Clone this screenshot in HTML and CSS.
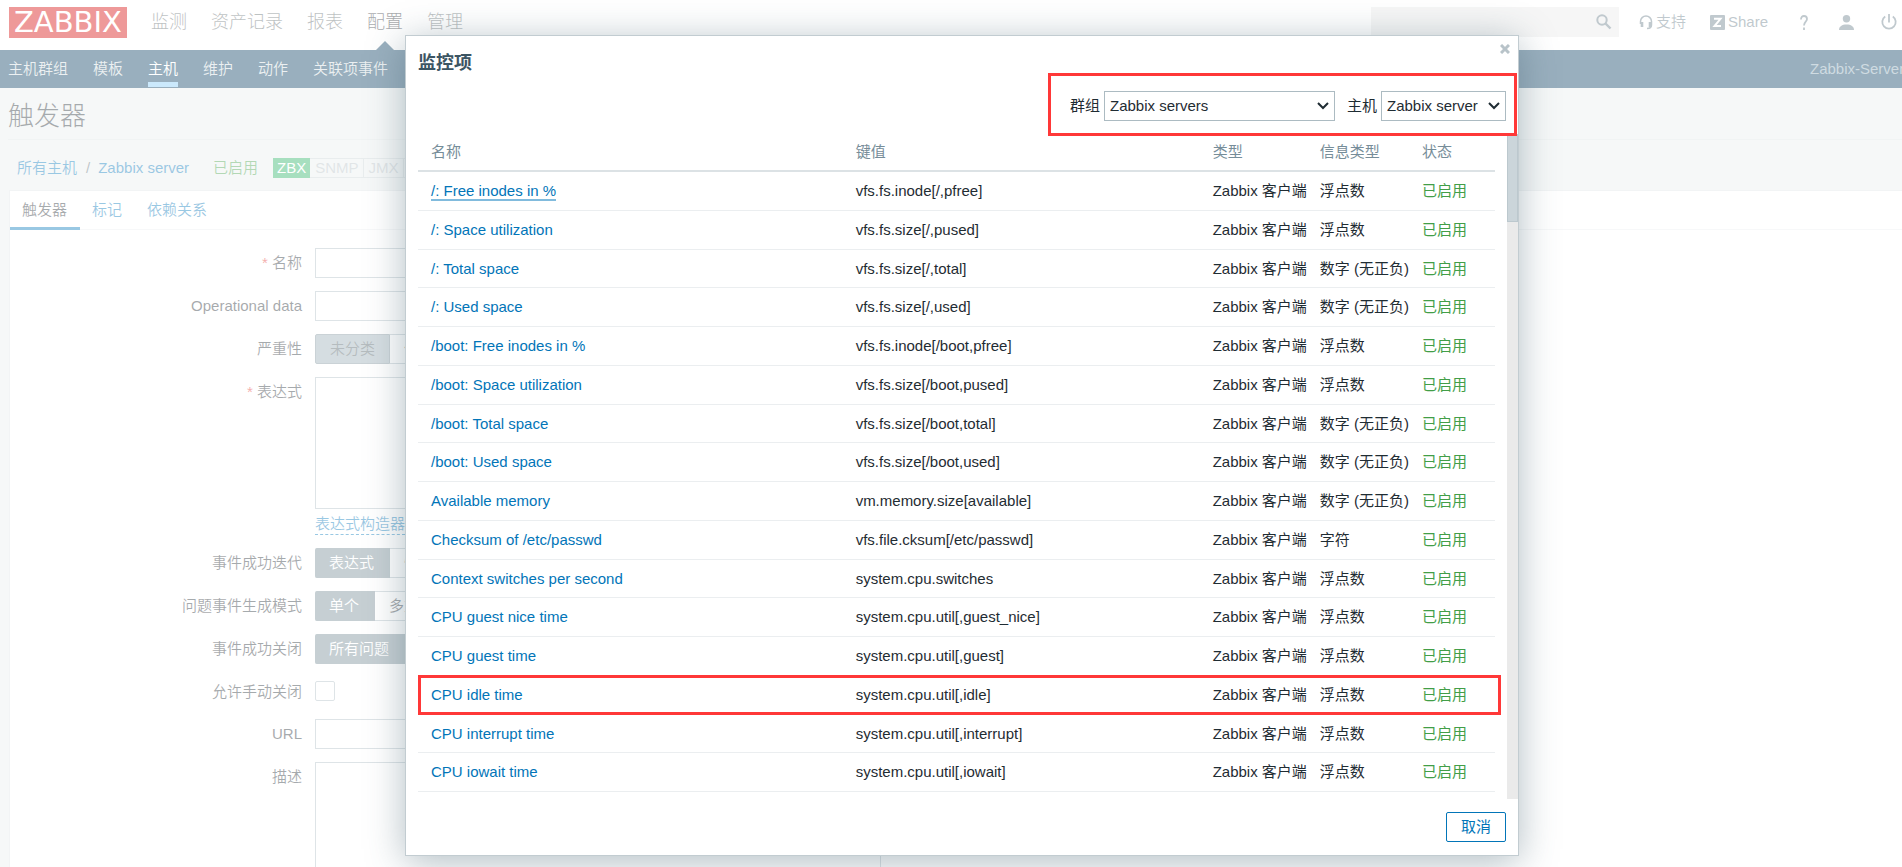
FILE: index.html
```html
<!DOCTYPE html>
<html lang="zh-CN">
<head>
<meta charset="utf-8">
<title>触发器</title>
<link rel="stylesheet" href="styles.css">
</head>
<body>
<div class="page">
  <header class="topbar">
    <a class="logo" href="#">ZABBIX</a>
    <nav class="main-nav">
      <a href="#">监测</a>
      <a href="#">资产记录</a>
      <a href="#">报表</a>
      <a href="#" class="active">配置</a>
      <a href="#">管理</a>
    </nav>
    <form class="search">
      <input type="search" aria-label="搜索">
      <button type="button" aria-label="搜索">
        <svg width="16" height="16" viewBox="0 0 16 16" fill="none" stroke="currentColor"><circle cx="6" cy="6" r="4.700" stroke-width="2"/><path d="M9.500 9.500 14.500 14.500" stroke-width="2.400"/></svg>
      </button>
    </form>
    <div class="tools">
      <a href="#" class="tool-support"><svg width="14" height="15" viewBox="0 0 14 15" fill="none" stroke="currentColor"><path d="M1.500 9V6.500a5.500 5.500 0 0 1 11 0V10c0 2.500-1.500 3.500-4.500 3.500" stroke-width="1.500"/><path d="M3 7v5M11 7v5" stroke-width="2.600"/></svg>支持</a>
      <a href="#" class="tool-share"><svg width="15" height="15" viewBox="0 0 15 15"><rect width="15" height="15" rx="1" fill="currentColor"/><path d="M4 3.800h6.500L4.500 11h6.500" fill="none" stroke="#fff" stroke-width="2"/></svg>Share</a>
      <a href="#" class="tool-help" aria-label="帮助"><svg width="8" height="15" viewBox="0 0 8 15" fill="none" stroke="currentColor" stroke-width="1.800"><path d="M1 4.500C1 2 2.200 1 4 1s3 1 3 3c0 2.500-3 3-3 6.500M4 12.500V15"/></svg></a>
      <a href="#" class="tool-user" aria-label="用户"><svg width="15" height="15" viewBox="0 0 15 15" fill="currentColor"><circle cx="7.500" cy="3.700" r="3.700"/><path d="M0 15c0-3.600 3-5.500 7.500-5.500S15 11.400 15 15z"/></svg></a>
      <a href="#" aria-label="退出"><svg width="16" height="16" viewBox="0 0 16 16" fill="none" stroke="currentColor" stroke-width="1.800"><path d="M8 0v8.500M4.200 2.500a6.700 6.700 0 1 0 7.600 0"/></svg></a>
    </div>
  </header>
  <nav class="sub-nav">
    <a href="#">主机群组</a>
    <a href="#">模板</a>
    <a href="#" class="active">主机</a>
    <a href="#">维护</a>
    <a href="#">动作</a>
    <a href="#">关联项事件</a>
    <span class="server">Zabbix-Server</span>
  </nav>
  <main class="content">
    <h1>触发器</h1>
    <div class="crumbs">
      <a href="#">所有主机</a><span class="sep">/</span><a href="#">Zabbix server</a>
      <span class="enabled">已启用</span>
      <span class="badges"><span class="on">ZBX</span><span>SNMP</span><span>JMX</span><span>IPMI</span></span>
    </div>
    <section class="panel">
      <div class="tabs">
        <a href="#" class="active">触发器</a>
        <a href="#">标记</a>
        <a href="#">依赖关系</a>
      </div>
      <form class="fields">
        <label for="f-name"><i>*</i> 名称</label>
        <input id="f-name" type="text">
        <label for="f-op">Operational data</label>
        <input id="f-op" type="text">
        <span class="label">严重性</span>
        <div class="seg severity"><button type="button" class="on">未分类</button><button type="button">信息</button></div>
        <label for="f-expr"><i>*</i> 表达式</label>
        <div class="expr"><textarea id="f-expr"></textarea><a href="#">表达式构造器</a></div>
        <span class="label">事件成功迭代</span>
        <div class="seg"><button type="button" class="on">表达式</button><button type="button">恢复表达式</button></div>
        <span class="label">问题事件生成模式</span>
        <div class="seg"><button type="button" class="on">单个</button><button type="button">多重</button></div>
        <span class="label">事件成功关闭</span>
        <div class="seg"><button type="button" class="on">所有问题</button></div>
        <label for="f-manual">允许手动关闭</label>
        <input id="f-manual" type="checkbox">
        <label for="f-url">URL</label>
        <input id="f-url" type="text">
        <label for="f-desc">描述</label>
        <textarea id="f-desc"></textarea>
      </form>
    </section>
  </main>
</div>
<div class="overlay"></div>
<div class="modal" role="dialog" aria-labelledby="dlg-title">
  <button class="close" type="button" aria-label="关闭"><svg width="10" height="10" viewBox="0 0 10 10" stroke="currentColor" stroke-width="3"><path d="M1 1 9 9M9 1 1 9"/></svg></button>
  <h2 id="dlg-title">监控项</h2>
  <div class="filters">
    <label for="s-group">群组</label>
    <select id="s-group" class="group"><option>Zabbix servers</option></select>
    <label for="s-host">主机</label>
    <select id="s-host" class="host"><option>Zabbix server</option></select>
    <div class="mark"></div>
  </div>
  <div class="body">
    <table>
      <colgroup><col><col class="c-key"><col class="c-type"><col class="c-info"><col class="c-status"></colgroup>
      <thead><tr><th>名称</th><th>键值</th><th>类型</th><th>信息类型</th><th>状态</th></tr></thead>
      <tbody>
        <tr><td><a href="#" class="focus">/: Free inodes in %</a></td><td>vfs.fs.inode[/,pfree]</td><td>Zabbix 客户端</td><td>浮点数</td><td>已启用</td></tr>
        <tr><td><a href="#">/: Space utilization</a></td><td>vfs.fs.size[/,pused]</td><td>Zabbix 客户端</td><td>浮点数</td><td>已启用</td></tr>
        <tr><td><a href="#">/: Total space</a></td><td>vfs.fs.size[/,total]</td><td>Zabbix 客户端</td><td>数字 (无正负)</td><td>已启用</td></tr>
        <tr><td><a href="#">/: Used space</a></td><td>vfs.fs.size[/,used]</td><td>Zabbix 客户端</td><td>数字 (无正负)</td><td>已启用</td></tr>
        <tr><td><a href="#">/boot: Free inodes in %</a></td><td>vfs.fs.inode[/boot,pfree]</td><td>Zabbix 客户端</td><td>浮点数</td><td>已启用</td></tr>
        <tr><td><a href="#">/boot: Space utilization</a></td><td>vfs.fs.size[/boot,pused]</td><td>Zabbix 客户端</td><td>浮点数</td><td>已启用</td></tr>
        <tr><td><a href="#">/boot: Total space</a></td><td>vfs.fs.size[/boot,total]</td><td>Zabbix 客户端</td><td>数字 (无正负)</td><td>已启用</td></tr>
        <tr><td><a href="#">/boot: Used space</a></td><td>vfs.fs.size[/boot,used]</td><td>Zabbix 客户端</td><td>数字 (无正负)</td><td>已启用</td></tr>
        <tr><td><a href="#">Available memory</a></td><td>vm.memory.size[available]</td><td>Zabbix 客户端</td><td>数字 (无正负)</td><td>已启用</td></tr>
        <tr><td><a href="#">Checksum of /etc/passwd</a></td><td>vfs.file.cksum[/etc/passwd]</td><td>Zabbix 客户端</td><td>字符</td><td>已启用</td></tr>
        <tr><td><a href="#">Context switches per second</a></td><td>system.cpu.switches</td><td>Zabbix 客户端</td><td>浮点数</td><td>已启用</td></tr>
        <tr><td><a href="#">CPU guest nice time</a></td><td>system.cpu.util[,guest_nice]</td><td>Zabbix 客户端</td><td>浮点数</td><td>已启用</td></tr>
        <tr><td><a href="#">CPU guest time</a></td><td>system.cpu.util[,guest]</td><td>Zabbix 客户端</td><td>浮点数</td><td>已启用</td></tr>
        <tr class="marked"><td><a href="#">CPU idle time</a></td><td>system.cpu.util[,idle]</td><td>Zabbix 客户端</td><td>浮点数</td><td>已启用</td></tr>
        <tr><td><a href="#">CPU interrupt time</a></td><td>system.cpu.util[,interrupt]</td><td>Zabbix 客户端</td><td>浮点数</td><td>已启用</td></tr>
        <tr><td><a href="#">CPU iowait time</a></td><td>system.cpu.util[,iowait]</td><td>Zabbix 客户端</td><td>浮点数</td><td>已启用</td></tr>
      </tbody>
    </table>
    <div class="scrollbar"><div class="thumb"></div></div>
  </div>
  <div class="footer"><button type="button">取消</button></div>
</div>
</body>
</html>
```
FILE: styles.css
```css
* { box-sizing: border-box; }
html, body { height: 100%; }
body {
  margin: 0;
  overflow: hidden;
  position: relative;
  background: #e9eeed;
  color: #1f2c33;
  font: 400 15px/20px "Liberation Sans", "Noto Sans CJK SC", sans-serif;
}
a { color: #0275b8; text-decoration: none; }
input, textarea, select, button { font: inherit; color: inherit; margin: 0; }

.page { height: 100%; overflow: hidden; font-weight: 350; }

.topbar {
  display: flex;
  align-items: center;
  height: 50px;
  padding: 0 5px 6px 9px;
  background: #fff;
}
.logo {
  padding: 0 5px;
  background: #d40000;
  color: #fff;
  font: 29px/31px "DejaVu Sans", sans-serif;
}
.main-nav { display: flex; gap: 24px; margin-left: 24px; align-self: stretch; }
.main-nav a { position: relative; color: #5b6668; font-size: 18px; font-weight: 300; line-height: 44px; }
.main-nav a.active { color: #1f2c33; }
.main-nav a.active::after {
  content: "";
  position: absolute;
  left: 9px;
  top: 41px;
  border: 9px solid transparent;
  border-top: 0;
  border-bottom-color: #00395d;
}
.search { display: flex; align-items: center; width: 248px; height: 30px; margin-left: auto; padding-right: 7px; background: #e8e8e8; }
.search input { flex: 1; min-width: 0; height: 30px; border: 0; background: none; }
.search button { display: flex; padding: 0; border: 0; background: none; color: #627884; }
.tools { display: flex; align-items: center; margin-left: 20px; }
.tools a { display: flex; align-items: center; gap: 3px; color: #627884; }
.tool-support { margin-right: 24px; }
.tool-share { margin-right: 32px; }
.tool-help { margin-right: 31px; }
.tool-user { margin-right: 27px; }

.sub-nav { display: flex; gap: 25px; height: 38px; padding-left: 8px; background: #00395d; overflow: hidden; }
.sub-nav a { height: 37px; line-height: 38px; color: #d0dade; }
.sub-nav a.active { color: #fff; border-bottom: 5px solid #7dc8f8; }
.sub-nav .server { flex: none; width: 92px; margin-left: auto; line-height: 38px; color: #87a5b6; white-space: nowrap; }

.content { padding-left: 9px; }
h1 { height: 52px; margin: 0 0 0 -1px; border-bottom: 1px solid #dce3e3; font-size: 26px; font-weight: 300; line-height: 57px; }
.crumbs { display: flex; align-items: center; height: 50px; padding: 6px 0 0 8px; }
.sep { margin: 0 8px 0 9px; color: #62727b; }
.enabled { margin: 0 15px 0 24px; color: #429e47; }
.badges { display: flex; line-height: 18px; }
.badges span { border: 1px solid #c8d1d4; border-left: 0; padding: 0 4px 0 5px; color: #b4bfc4; }
.badges .on { background: #24ae5f; border-color: #24ae5f; color: #fff; padding: 0 3px 0 4px; }

.panel { background: #fff; border: 1px solid #dfe4e7; border-right: 0; height: 1000px; }
.tabs { display: flex; height: 39px; border-bottom: 1px solid #ebeef0; }
.tabs a { padding: 0 13px 0 12px; line-height: 37px; }
.tabs a.active { color: #1f2c33; border-bottom: 3px solid #0275b8; height: 39px; }
.fields {
  display: grid;
  grid-template-columns: 292px 566px;
  column-gap: 13px;
  row-gap: 13px;
  padding-top: 18px;
}
.fields label, .fields .label { text-align: right; line-height: 30px; color: #1f2c33; }
.fields i { color: #e33734; font-style: normal; }
.fields input[type=text] { height: 30px; }
.fields input[type=text], .fields textarea { border: 1px solid #acbbc2; background: #fff; width: 100%; padding: 4px; resize: none; }
.fields textarea { display: block; height: 132px; }
.fields label[for=f-manual] { height: 29px; }
.fields input[type=checkbox] { appearance: none; width: 20px; height: 20px; margin-top: 4px; border: 1px solid #acbbc2; border-radius: 2px; background: #fff; }
.expr a { display: block; width: max-content; margin-top: 5px; border-bottom: 1px dashed #0275b8; line-height: 20px; }
.seg { display: flex; height: 30px; }
.seg button { padding: 0 14px; border: 1px solid #acbbc2; border-left: 0; background: #fff; }
.seg button.on { background: #708892; border-color: #708892; color: #fff; padding: 0 15px 0 14px; border-radius: 2px 0 0 2px; }
.severity button.on { background: #97aab3; border: 1px solid #7a9099; color: #47585f; padding: 0 14px; }

.overlay { position: absolute; inset: 0; background: #fff; opacity: .6; }

.modal {
  position: absolute;
  left: 405px;
  right: 383px;
  top: 35px;
  display: flex;
  flex-direction: column;
  background: #fff;
  border: 1px solid #c2ccd1;
  box-shadow: 0 6px 36px rgba(60, 90, 105, .4);
}
.close { position: absolute; right: 8px; top: 8px; display: flex; padding: 0; border: 0; background: none; color: #b8c3c9; }
.modal h2 { margin: 0; padding: 16px 12px 0; color: #3c5563; font-size: 18px; line-height: 22px; font-weight: 700; }
.filters { position: relative; display: flex; align-items: center; justify-content: flex-end; margin-top: 17px; padding-right: 12px; }
.filters select {
  appearance: none;
  height: 30px;
  padding: 0 5px;
  border: 1px solid #acbbc2;
  border-radius: 0;
  background: #fff url("data:image/svg+xml,%3Csvg xmlns='http://www.w3.org/2000/svg' width='12' height='8' viewBox='0 0 12 8'%3E%3Cpath d='M1 1l5 5 5-5' fill='none' stroke='%231f2c33' stroke-width='2'/%3E%3C/svg%3E") no-repeat right 5px center;
  color: #1f2c33;
}
.filters label { margin-right: 4px; }
.filters .group { width: 231px; margin-right: 12px; }
.filters .host { width: 125px; }
.mark { position: absolute; right: 1px; top: -18px; width: 469px; height: 63px; border: 3px solid #ff3838; pointer-events: none; }
.body { display: flex; justify-content: space-between; height: 665px; margin: 13px 0 0 12px; overflow: hidden; }
table { flex: 1; margin-right: 12px; border-collapse: separate; border-spacing: 0; table-layout: fixed; height: max-content; }
.c-key { width: 357px; }
.c-type { width: 106px; }
.c-info { width: 102px; }
.c-status { width: 86px; }
th, td { padding: 0 0 0 13px; text-align: left; white-space: nowrap; font-weight: 400; height: 39px; border-bottom: 1px solid #ebeef0; }
th { height: 38px; color: #768d99; border-bottom: 2px solid #dce2e5; }
tr:nth-child(4n + 3) td { height: 38px; }
td:last-child { color: #429e47; }
a.focus { display: inline-block; line-height: 17px; border-bottom: 2px solid #81bbdd; }
.marked { position: relative; }
.marked::after { content: ""; position: absolute; inset: -1px -6px 0 0; border: 3px solid #ff3838; }
.scrollbar { width: 11px; background: #eaeaea; }
.thumb { height: 88px; background: #cbd5da; border: 1px solid #bcc8ce; }
.footer { display: flex; justify-content: flex-end; padding: 13px 12px; }
.footer button { width: 60px; height: 30px; padding: 0; background: #fff; border: 1px solid #0275b8; border-radius: 2px; color: #0275b8; }
```
